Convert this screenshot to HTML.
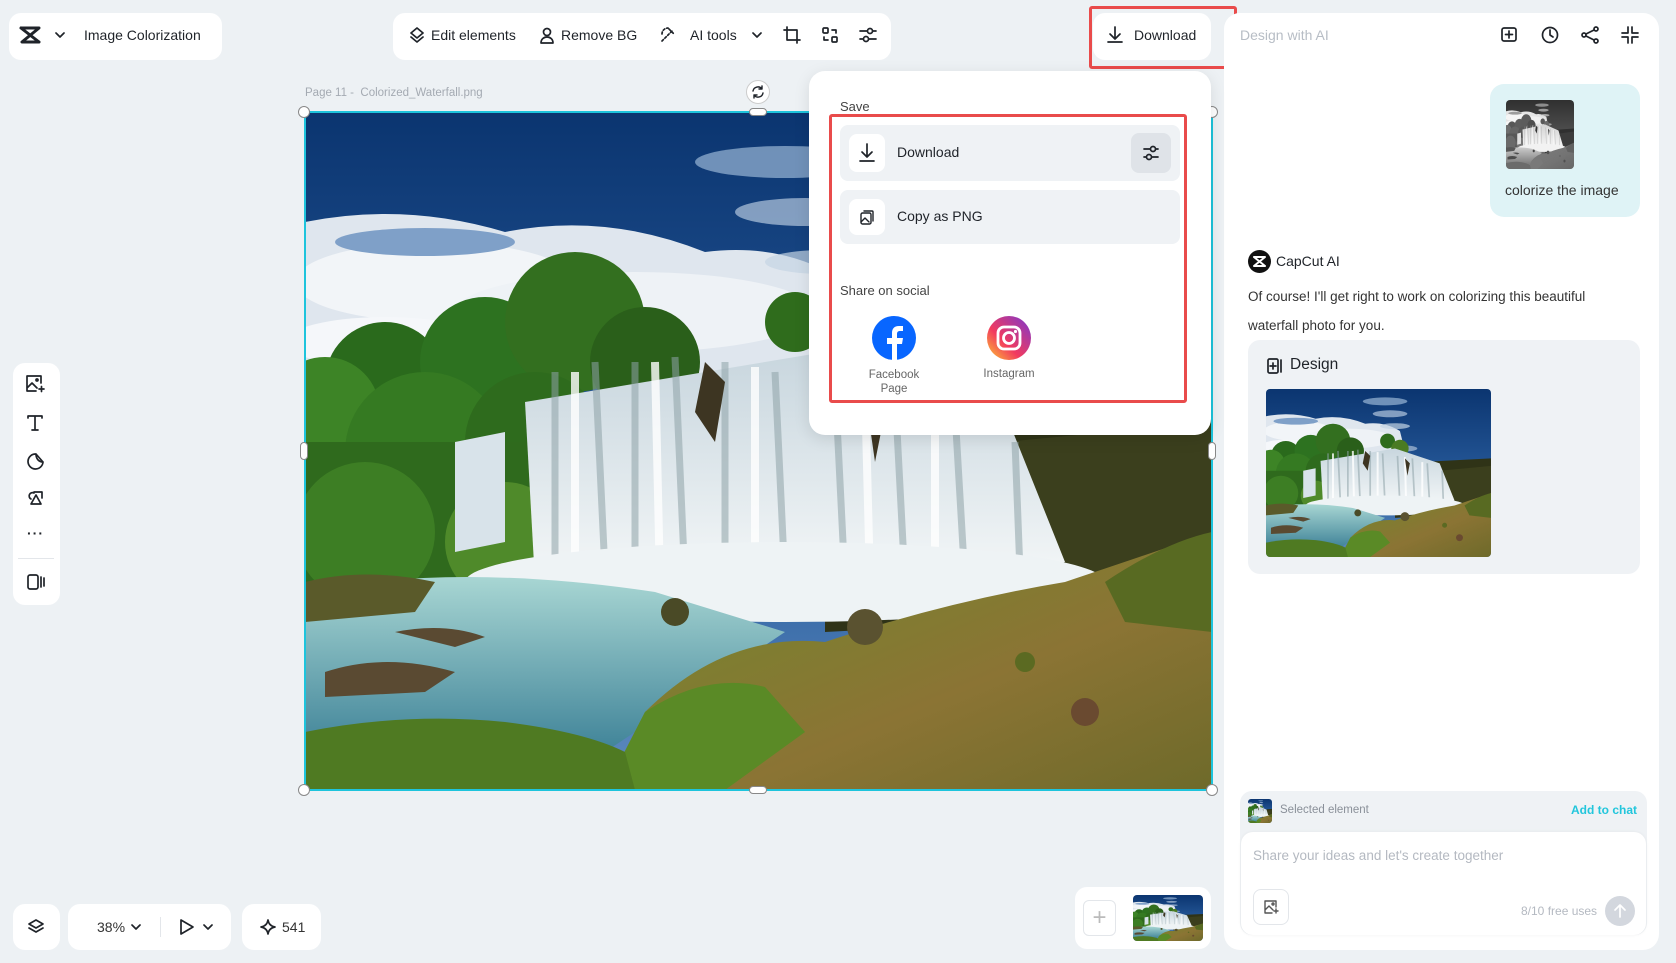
<!DOCTYPE html>
<html><head><meta charset="utf-8"><style>
*{box-sizing:border-box;margin:0;padding:0}
body{width:1676px;height:963px;background:#edf1f4;font-family:"Liberation Sans",sans-serif;color:#1f2329;position:relative;overflow:hidden}
.p{position:absolute;background:#fff;border-radius:12px}
.t{position:absolute;white-space:nowrap}
svg.i{position:absolute;fill:none;stroke:#1f2329;stroke-width:1.7;stroke-linecap:round;stroke-linejoin:round}
</style></head><body>
<svg width="0" height="0" style="position:absolute"><defs>
<linearGradient id="sky" x1="0" y1="0" x2="0" y2="1"><stop offset="0" stop-color="#0b3570"/><stop offset=".6" stop-color="#2a5e9f"/><stop offset="1" stop-color="#5f8cbf"/></linearGradient>
<linearGradient id="wat" x1="0" y1="0" x2="0" y2="1"><stop offset="0" stop-color="#a8d6d3"/><stop offset="1" stop-color="#3f8398"/></linearGradient>
<linearGradient id="gr" x1="0" y1="0" x2="1" y2="1"><stop offset="0" stop-color="#6f8a2c"/><stop offset=".6" stop-color="#8b7434"/><stop offset="1" stop-color="#6e6a2a"/></linearGradient>
<linearGradient id="fall" x1="0" y1="0" x2="0" y2="1"><stop offset="0" stop-color="#c8d6de"/><stop offset="1" stop-color="#f4f7f8"/></linearGradient>
<symbol id="scene" viewBox="0 0 907 678" preserveAspectRatio="none">
<rect width="907" height="678" fill="url(#sky)"/>
<path d="M0 110 Q100 90 200 120 Q300 100 400 140 Q480 130 540 170 L560 250 L0 300Z" fill="#dfe6ee"/>
<ellipse cx="130" cy="170" rx="140" ry="40" fill="#f2f5f8"/>
<ellipse cx="330" cy="200" rx="180" ry="40" fill="#eef2f6"/>
<ellipse cx="80" cy="230" rx="100" ry="25" fill="#f5f7fa"/>
<ellipse cx="120" cy="130" rx="90" ry="14" fill="#7fa0c8"/>
<ellipse cx="480" cy="50" rx="90" ry="16" fill="#9ab6d6" opacity=".7"/>
<ellipse cx="500" cy="100" rx="70" ry="14" fill="#b4c8de" opacity=".7"/>
<ellipse cx="520" cy="150" rx="60" ry="12" fill="#c4d4e4" opacity=".7"/>
<ellipse cx="560" cy="240" rx="50" ry="12" fill="#c4d4e4" opacity=".6"/>
<path d="M520 300 L907 280 L907 500 L520 520Z" fill="#2f3317"/>
<path d="M700 330 L907 310 L907 470 L760 470Z" fill="#3b3f1d"/>
<circle cx="80" cy="270" r="60" fill="#2a6a1c"/>
<circle cx="180" cy="250" r="65" fill="#2d7220"/>
<circle cx="270" cy="210" r="70" fill="#336f1f"/>
<circle cx="340" cy="250" r="55" fill="#2a5f1a"/>
<circle cx="20" cy="300" r="55" fill="#3d8426"/>
<circle cx="120" cy="340" r="80" fill="#357a22"/>
<circle cx="230" cy="330" r="70" fill="#2e6b1d"/>
<circle cx="490" cy="210" r="30" fill="#2f6c1c"/>
<circle cx="540" cy="240" r="35" fill="#4a7b23"/>
<rect x="0" y="330" width="300" height="140" fill="#2f6a1d"/>
<circle cx="60" cy="420" r="70" fill="#3d7e24"/>
<circle cx="200" cy="430" r="60" fill="#4f8a2a"/>
<path d="M220 290 L520 240 L700 300 L760 450 L700 470 L230 470Z" fill="url(#fall)"/>
<path d="M150 330 L200 320 L200 430 L150 440Z" fill="#d8e3ea"/>
<path d="M250 260 L250 460 M290 250 L300 460 M330 250 L330 470 M370 245 L380 470 M420 250 L420 470 M470 260 L480 470 M530 270 L540 470 M590 280 L600 470 M650 300 L660 470 M710 330 L715 460" stroke="#8fa3a8" stroke-width="7" opacity=".55"/>
<path d="M270 260 L270 460 M350 250 L355 470 M450 255 L450 470 M560 275 L565 470 M630 295 L630 470" stroke="#ffffff" stroke-width="8" opacity=".8"/>
<path d="M400 250 L420 270 L410 330 L390 300Z M560 280 L580 300 L570 350Z" fill="#3d3522"/>
<ellipse cx="480" cy="470" rx="320" ry="40" fill="#eef3f5"/>
<path d="M0 480 Q150 450 350 480 L480 520 L420 560 L300 640 L0 640Z" fill="url(#wat)"/>
<path d="M0 470 Q60 455 130 470 L110 500 L0 510Z" fill="#5a5a2a"/>
<path d="M20 560 Q80 540 150 560 L120 580 L20 585Z M90 520 Q140 510 180 525 L150 535Z" fill="#5a4a32"/>
<path d="M300 678 L340 600 Q420 520 520 530 Q640 490 760 470 Q850 440 907 420 L907 678Z" fill="url(#gr)"/>
<path d="M800 470 Q860 430 907 420 L907 520 L820 510Z" fill="#586a22"/>
<path d="M300 678 L340 600 Q400 560 460 575 L500 620 L420 678Z" fill="#5a8a26"/>
<path d="M0 678 L0 620 Q100 600 200 610 Q280 620 320 640 L330 678Z" fill="#4f7a22"/>
<circle cx="370" cy="500" r="14" fill="#4a4a26"/><circle cx="560" cy="515" r="18" fill="#5a5230"/><circle cx="780" cy="600" r="14" fill="#6a4a30"/><circle cx="720" cy="550" r="10" fill="#5b6a22"/>
</symbol>
</defs></svg>

<!-- title panel -->
<div class="p" style="left:9px;top:13px;width:213px;height:47px"></div>
<svg class="i" style="left:19px;top:26px" width="22" height="18" viewBox="0 0 22 18"><path d="M2 2h18L3 16h17M2 2l18 14" stroke-width="3"/></svg>
<svg class="i" style="left:55px;top:32px" width="10" height="6" viewBox="0 0 10 6"><path d="M1 1l4 4 4-4"/></svg>
<div class="t" style="left:84px;top:27px;font-size:14px">Image Colorization</div>

<!-- toolbar -->
<div class="p" style="left:393px;top:13px;width:498px;height:47px"></div>
<svg class="i" style="left:409px;top:27px" width="16" height="17" viewBox="0 0 16 17"><path d="M8 1l6 5-6 5-6-5z M2 10l6 5 6-5"/></svg>
<div class="t" style="left:431px;top:27px;font-size:14px">Edit elements</div>
<svg class="i" style="left:540px;top:27px" width="14" height="17" viewBox="0 0 14 17"><circle cx="7" cy="5" r="3.5"/><path d="M1 16c0-4 3-6 6-6s6 2 6 6z"/></svg>
<div class="t" style="left:561px;top:27px;font-size:14px">Remove BG</div>
<svg class="i" style="left:659px;top:26px" width="18" height="18" viewBox="0 0 18 18"><path d="M3 15L14 4M10 3l5 5M3 8a6 6 0 016-6" stroke-dasharray="2 2"/></svg>
<div class="t" style="left:690px;top:27px;font-size:14px">AI tools</div>
<svg class="i" style="left:752px;top:32px" width="10" height="6" viewBox="0 0 10 6"><path d="M1 1l4 4 4-4"/></svg>
<svg class="i" style="left:783px;top:26px" width="18" height="18" viewBox="0 0 18 18"><path d="M4 1v13h13M1 4h13v13"/></svg>
<svg class="i" style="left:821px;top:26px" width="18" height="18" viewBox="0 0 18 18"><rect x="2" y="2" width="5" height="5" rx="1"/><rect x="11" y="11" width="5" height="5" rx="1"/><path d="M11 4h4v3M7 14H3v-3"/></svg>
<svg class="i" style="left:859px;top:26px" width="18" height="18" viewBox="0 0 18 18"><path d="M1 5h16M1 13h16"/><circle cx="11" cy="5" r="2.5" fill="#fff"/><circle cx="7" cy="13" r="2.5" fill="#fff"/></svg>

<!-- download button -->
<div class="p" style="left:1093px;top:13px;width:118px;height:47px"></div>
<div style="position:absolute;left:1089px;top:6px;width:148px;height:63px;border:3px solid #e94b4b;border-radius:3px"></div>
<svg class="i" style="left:1106px;top:26px" width="18" height="18" viewBox="0 0 18 18"><path d="M9 1v11M4 8l5 5 5-5M2 16h14"/></svg>
<div class="t" style="left:1134px;top:27px;font-size:14px">Download</div>

<!-- right panel -->
<div class="p" style="left:1224px;top:13px;width:435px;height:937px;border-radius:16px"></div>
<div class="t" style="left:1240px;top:27px;font-size:14px;color:#b7bdc5">Design with AI</div>
<svg class="i" style="left:1500px;top:26px" width="18" height="18" viewBox="0 0 18 18"><rect x="2" y="2" width="14" height="13" rx="2"/><path d="M9 5v7M5.5 8.5h7"/></svg>
<svg class="i" style="left:1541px;top:26px" width="18" height="18" viewBox="0 0 18 18"><circle cx="9" cy="9" r="7.5"/><path d="M9 4v5l3 2"/></svg>
<svg class="i" style="left:1581px;top:26px" width="18" height="18" viewBox="0 0 18 18"><circle cx="3" cy="9" r="2"/><circle cx="15" cy="3" r="2"/><circle cx="15" cy="15" r="2"/><path d="M5 8l8-4M5 10l8 4"/></svg>
<svg class="i" style="left:1621px;top:26px" width="18" height="18" viewBox="0 0 18 18"><path d="M7 1v6H1M11 1v6h6M7 17v-6H1M11 17v-6h6"/></svg>

<div style="position:absolute;left:1490px;top:84px;width:150px;height:133px;background:#dff3f6;border-radius:14px"></div>
<svg style="position:absolute;left:1506px;top:100px;border-radius:4px;filter:grayscale(1)" width="68" height="69"><use href="#scene"/></svg>
<div class="t" style="left:1505px;top:182px;font-size:14px;color:#333">colorize the image</div>

<div style="position:absolute;left:1248px;top:250px;width:23px;height:23px;border-radius:50%;background:#111"></div>
<svg class="i" style="left:1253px;top:256px;stroke:#fff;stroke-width:2" width="13" height="11" viewBox="0 0 13 11"><path d="M1 1h11L1 10h11M1 1l11 9"/></svg>
<div class="t" style="left:1276px;top:253px;font-size:14px">CapCut AI</div>
<div class="t" style="left:1248px;top:282px;font-size:13.5px;line-height:29px;color:#333">Of course! I'll get right to work on colorizing this beautiful<br>waterfall photo for you.</div>

<div style="position:absolute;left:1248px;top:340px;width:392px;height:234px;background:#eff2f5;border-radius:12px"></div>
<svg class="i" style="left:1266px;top:357px" width="18" height="18" viewBox="0 0 18 18"><rect x="2" y="2" width="10" height="14" rx="1.5"/><path d="M7 6v6M4 9h6M15 3v12"/></svg>
<div class="t" style="left:1290px;top:356px;font-size:15.5px">Design</div>
<svg style="position:absolute;left:1266px;top:389px;border-radius:4px" width="225" height="168"><use href="#scene"/></svg>

<!-- chat bottom -->
<div style="position:absolute;left:1240px;top:791px;width:407px;height:144px;background:#eff2f5;border-radius:12px"></div>
<svg style="position:absolute;left:1248px;top:799px;border-radius:3px" width="24" height="24"><use href="#scene"/></svg>
<div class="t" style="left:1280px;top:804px;font-size:11.5px;color:#8a9099">Selected element</div>
<div class="t" style="left:1571px;top:803px;font-size:12px;color:#22c6dc;font-weight:bold">Add to chat</div>
<div style="position:absolute;left:1241px;top:832px;width:405px;height:103px;background:#fff;border-radius:12px;box-shadow:0 0 3px rgba(0,0,0,.06)"></div>
<div class="t" style="left:1253px;top:848px;font-size:13.5px;color:#b4b9c1">Share your ideas and let's create together</div>
<div style="position:absolute;left:1253px;top:889px;width:36px;height:36px;border:1px solid #e3e6ea;border-radius:8px"></div>
<svg class="i" style="left:1263px;top:899px;stroke-width:1.4;stroke:#555" width="16" height="16" viewBox="0 0 16 16"><path d="M13 8V2H2v12h7M2 11l4-4 4 4M11 12h4M13 10v4"/><circle cx="10" cy="5" r="1"/></svg>
<div class="t" style="left:1521px;top:904px;font-size:12px;color:#b4b9c1">8/10 free uses</div>
<div style="position:absolute;left:1605px;top:896px;width:30px;height:30px;border-radius:50%;background:#d3d7de"></div>
<svg class="i" style="left:1613px;top:903px;stroke:#fff" width="14" height="16" viewBox="0 0 14 16"><path d="M7 14V2M2 7l5-5 5 5"/></svg>

<!-- canvas -->
<div class="t" style="left:305px;top:87px;font-size:11.5px;color:#a4aab2">Page 11 -&nbsp;&nbsp;Colorized_Waterfall.png</div>
<svg style="position:absolute;left:305px;top:112px" width="907" height="678"><use href="#scene"/></svg>
<div style="position:absolute;left:304px;top:111px;width:909px;height:680px;border:2px solid #1ec4dc"></div>
<div style="position:absolute;left:298px;top:106px;width:12px;height:12px;border-radius:50%;background:#fff;border:1px solid #888"></div>
<div style="position:absolute;left:298px;top:784px;width:12px;height:12px;border-radius:50%;background:#fff;border:1px solid #888"></div>
<div style="position:absolute;left:1206px;top:784px;width:12px;height:12px;border-radius:50%;background:#fff;border:1px solid #888"></div>
<div style="position:absolute;left:1206px;top:106px;width:12px;height:12px;border-radius:50%;background:#fff;border:1px solid #888"></div>
<div style="position:absolute;left:749px;top:108px;width:18px;height:8px;border-radius:4px;background:#fff;border:1px solid #888"></div>
<div style="position:absolute;left:749px;top:786px;width:18px;height:8px;border-radius:4px;background:#fff;border:1px solid #888"></div>
<div style="position:absolute;left:300px;top:442px;width:8px;height:18px;border-radius:4px;background:#fff;border:1px solid #888"></div>
<div style="position:absolute;left:1208px;top:442px;width:8px;height:18px;border-radius:4px;background:#fff;border:1px solid #888"></div>
<div style="position:absolute;left:746px;top:80px;width:24px;height:24px;border-radius:50%;background:#fff;border:1px solid #ccc"></div>
<svg class="i" style="left:751px;top:85px;stroke-width:1.4" width="14" height="14" viewBox="0 0 14 14"><path d="M2 6a5 5 0 019-2M12 8a5 5 0 01-9 2M11 1v3H8M3 13v-3h3"/></svg>

<!-- dropdown -->
<div style="position:absolute;left:809px;top:71px;width:402px;height:364px;background:#fff;border-radius:16px;box-shadow:0 4px 16px rgba(0,0,0,.1)"></div>
<div class="t" style="left:840px;top:99px;font-size:13px;color:#444">Save</div>
<div style="position:absolute;left:840px;top:125px;width:340px;height:56px;background:#eff2f5;border-radius:8px"></div>
<div style="position:absolute;left:849px;top:134px;width:36px;height:38px;background:#fff;border-radius:8px"></div>
<svg class="i" style="left:857px;top:143px" width="20" height="20" viewBox="0 0 20 20"><path d="M10 1v13M5 9l5 5 5-5M3 18h14"/></svg>
<div class="t" style="left:897px;top:144px;font-size:14px">Download</div>
<div style="position:absolute;left:1131px;top:133px;width:40px;height:40px;background:#dfe3e8;border-radius:8px"></div>
<svg class="i" style="left:1142px;top:144px" width="18" height="18" viewBox="0 0 18 18"><path d="M2 5h14M2 13h14"/><circle cx="11" cy="5" r="2.5" fill="#dfe3e8"/><circle cx="7" cy="13" r="2.5" fill="#dfe3e8"/></svg>
<div style="position:absolute;left:840px;top:190px;width:340px;height:54px;background:#eff2f5;border-radius:8px"></div>
<div style="position:absolute;left:849px;top:199px;width:36px;height:36px;background:#fff;border-radius:8px"></div>
<svg class="i" style="left:858px;top:208px;stroke-width:1.4" width="18" height="18" viewBox="0 0 18 18"><rect x="3" y="5" width="10" height="11" rx="1.5"/><path d="M6 3h8a1 1 0 011 1v9M3 14l4-4 4 4"/></svg>
<div class="t" style="left:897px;top:208px;font-size:14px">Copy as PNG</div>
<div class="t" style="left:840px;top:283px;font-size:13px;color:#444">Share on social</div>
<svg style="position:absolute;left:872px;top:316px" width="44" height="44" viewBox="0 0 44 44"><circle cx="22" cy="22" r="22" fill="#0866ff"/><path d="M25 44V28h5l1-6h-6v-4c0-2 1-3 3-3h3v-5h-4c-5 0-7 3-7 7v5h-5v6h5v16z" fill="#fff"/></svg>
<div class="t" style="left:894px;top:368px;font-size:11.5px;color:#666;transform:translateX(-50%);text-align:center;line-height:14px">Facebook<br>Page</div>
<svg style="position:absolute;left:987px;top:316px" width="44" height="44" viewBox="0 0 44 44"><defs><linearGradient id="ig" x1="0" y1="1" x2="1" y2="0"><stop offset="0" stop-color="#fdc830"/><stop offset=".4" stop-color="#f23a5f"/><stop offset="1" stop-color="#7a38d0"/></linearGradient></defs><circle cx="22" cy="22" r="22" fill="url(#ig)"/><rect x="11" y="11" width="22" height="22" rx="6" fill="none" stroke="#fff" stroke-width="2.8"/><circle cx="22" cy="22" r="5.5" fill="none" stroke="#fff" stroke-width="2.8"/><circle cx="28.5" cy="15.5" r="1.6" fill="#fff"/></svg>
<div class="t" style="left:1009px;top:368px;font-size:11.5px;color:#666;transform:translateX(-50%)">Instagram</div>
<div style="position:absolute;left:829px;top:114px;width:358px;height:289px;border:3px solid #e94b4b;border-radius:3px"></div>

<!-- left toolbar -->
<div class="p" style="left:13px;top:363px;width:47px;height:242px"></div>
<svg class="i" style="left:25px;top:374px" width="20" height="20" viewBox="0 0 20 20"><path d="M16 9V2H2v15h9M2 14l5-5 5 5M14 15h5M16.5 12.5v5"/><circle cx="12" cy="6" r="1"/></svg>
<svg class="i" style="left:26px;top:414px" width="18" height="18" viewBox="0 0 18 18"><path d="M2 4V2h14v2M9 2v14M6 16h6"/></svg>
<svg class="i" style="left:26px;top:452px" width="18" height="18" viewBox="0 0 18 18"><path d="M10 2a7.5 7.5 0 107 8c-4 0-7-3-7-8zM10 2l7 8"/></svg>
<svg class="i" style="left:26px;top:489px" width="18" height="18" viewBox="0 0 18 18"><path d="M8 4a3 3 0 10-3 6M10 6l5 9H5z M8 3h8v6"/></svg>
<div class="t" style="left:27px;top:525px;font-size:14px;font-weight:bold;letter-spacing:1px">···</div>
<div style="position:absolute;left:18px;top:558px;width:36px;height:1px;background:#e3e6ea"></div>
<svg class="i" style="left:26px;top:573px" width="20" height="18" viewBox="0 0 20 18"><rect x="2" y="2" width="10" height="14" rx="2"/><path d="M15 4v10M18 5v8"/></svg>

<!-- bottom -->
<div class="p" style="left:13px;top:904px;width:47px;height:46px"></div>
<svg class="i" style="left:27px;top:918px" width="18" height="18" viewBox="0 0 18 18"><path d="M9 2l7 4-7 4-7-4z M2 10l7 4 7-4"/></svg>
<div class="p" style="left:68px;top:904px;width:163px;height:46px"></div>
<div class="t" style="left:97px;top:919px;font-size:14px;color:#333">38%</div>
<svg class="i" style="left:131px;top:924px" width="10" height="6" viewBox="0 0 10 6"><path d="M1 1l4 4 4-4"/></svg>
<div style="position:absolute;left:160px;top:917px;width:1px;height:20px;background:#e3e6ea"></div>
<svg class="i" style="left:179px;top:918px" width="16" height="18" viewBox="0 0 16 18"><path d="M2 2l12 7-12 7z"/></svg>
<svg class="i" style="left:203px;top:924px" width="10" height="6" viewBox="0 0 10 6"><path d="M1 1l4 4 4-4"/></svg>
<div class="p" style="left:242px;top:904px;width:79px;height:46px"></div>
<svg class="i" style="left:260px;top:919px" width="16" height="16" viewBox="0 0 16 16"><path d="M8 1Q9 7 15 8Q9 9 8 15Q7 9 1 8Q7 7 8 1z"/></svg>
<div class="t" style="left:282px;top:919px;font-size:14px;color:#333">541</div>

<div class="p" style="left:1075px;top:887px;width:136px;height:62px"></div>
<div style="position:absolute;left:1083px;top:900px;width:33px;height:36px;border:1px solid #e3e6ea;border-radius:6px;color:#bbb;font-size:24px;text-align:center;line-height:33px">+</div>
<svg style="position:absolute;left:1133px;top:895px;border-radius:4px" width="70" height="46"><use href="#scene"/></svg>
</body></html>
